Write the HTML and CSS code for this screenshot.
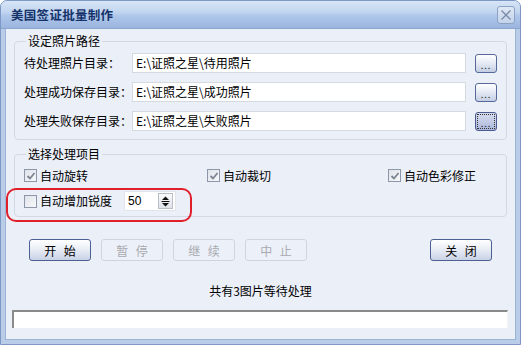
FILE: index.html
```html
<!DOCTYPE html>
<html lang="zh-CN">
<head>
    <meta charset="UTF-8">
    <title>美国签证批量制作</title>
    <link rel="stylesheet" href="styles.css">
</head>
<body>
    <div class="window">
        <div class="titlebar">
            <span class="title">美国签证批量制作</span>
            <span class="close-btn">
                <svg width="12" height="12" viewBox="0 0 12 12"><path d="M1.5 1.5 L10.5 10.5 M10.5 1.5 L1.5 10.5" stroke="#7a8aa6" stroke-width="1.3" fill="none"/></svg>
            </span>
        </div>
        <div class="client">
            <fieldset class="group paths">
                <legend>设定照片路径</legend>
                <div class="path-row">
                    <span class="label">待处理照片目录：</span>
                    <div class="input">E:\证照之星\待用照片</div>
                    <span class="browse"><span class="dots">...</span></span>
                </div>
                <div class="path-row">
                    <span class="label">处理成功保存目录：</span>
                    <div class="input">E:\证照之星\成功照片</div>
                    <span class="browse"><span class="dots">...</span></span>
                </div>
                <div class="path-row">
                    <span class="label">处理失败保存目录：</span>
                    <div class="input">E:\证照之星\失败照片</div>
                    <span class="browse focused"><span class="dots">...</span></span>
                </div>
            </fieldset>

            <fieldset class="group options">
                <legend>选择处理项目</legend>
                <div class="opt-grid">
                    <label class="opt"><span class="chk"><svg width="10" height="10" viewBox="0 0 10 10"><path d="M1.5 5 L4 7.5 L8.5 2" stroke="#7d8491" stroke-width="1.8" fill="none"/></svg></span>自动旋转</label>
                    <label class="opt"><span class="chk"><svg width="10" height="10" viewBox="0 0 10 10"><path d="M1.5 5 L4 7.5 L8.5 2" stroke="#7d8491" stroke-width="1.8" fill="none"/></svg></span>自动裁切</label>
                    <label class="opt"><span class="chk"><svg width="10" height="10" viewBox="0 0 10 10"><path d="M1.5 5 L4 7.5 L8.5 2" stroke="#7d8491" stroke-width="1.8" fill="none"/></svg></span>自动色彩修正</label>
                </div>
                <div class="sharp-row">
                    <label class="opt"><span class="chk"></span>自动增加锐度</label>
                    <div class="spinner">
                        <span class="spin-val">50</span>
                        <span class="spin-btn">
                            <svg width="11" height="13" viewBox="0 0 11 13"><path d="M5.5 1.5 L9 5 L2 5 Z" fill="#111"/><path d="M1.5 6.5 H9.5" stroke="#111" stroke-width="1"/><path d="M2 8 L9 8 L5.5 11.5 Z" fill="#111"/></svg>
                        </span>
                    </div>
                </div>
                <div class="highlight"></div>
            </fieldset>

            <div class="actions">
                <span class="btn">开 始</span>
                <span class="btn disabled">暂 停</span>
                <span class="btn disabled">继 续</span>
                <span class="btn disabled">中 止</span>
                <span class="btn close">关 闭</span>
            </div>

            <div class="status">共有3图片等待处理</div>
            <div class="progress"></div>
        </div>
    </div>
</body>
</html>
```

FILE: styles.css
```css
body {
    margin: 0;
    background: #ffffff;
    font-family: "Noto Sans CJK SC", "Liberation Sans", sans-serif;
    font-size: 12px;
    color: #000;
}
.window {
    width: 521px;
    height: 345px;
    box-sizing: border-box;
    border: 1px solid #7d98c4;
    border-radius: 7px 7px 0 0;
    background: #b9cde9;
    display: flex;
    flex-direction: column;
    overflow: hidden;
}
.titlebar {
    height: 27px;
    flex: none;
    display: flex;
    align-items: center;
    padding: 0 5px 0 10px;
    background: linear-gradient(#d7e5f6, #c2d6f0 40%, #aec6ea 55%, #9bb5df);
    border-bottom: 1px solid #8ba5cf;
}
.title {
    font-weight: bold;
    font-size: 12.5px;
    letter-spacing: 0.3px;
    color: #15336b;
}
.close-btn {
    margin-left: auto;
    width: 16px;
    height: 16px;
    border: 1px solid #8da3c6;
    border-radius: 3px;
    background: linear-gradient(#dfe8f5, #c4d3ea);
    display: flex;
    align-items: center;
    justify-content: center;
}
.client {
    flex: 1;
    margin: 0 4px 4px 4px;
    background: #ebeff8;
    border: 1px solid #9db3d6;
    border-top: none;
    display: flex;
    flex-direction: column;
    position: relative;
}
.group {
    margin: 0 8px 0 8px;
    border: 1px solid #d2d8e4;
    border-radius: 4px;
    padding: 4px 9px 8px 9px;
    min-width: 0;
}
.group legend {
    padding: 0 2px;
    margin-left: 2px;
    line-height: 16px;
}
.paths {
    margin-top: 4px;
    display: flex;
    flex-direction: column;
}
.path-row {
    display: flex;
    align-items: center;
    height: 20px;
    margin-bottom: 9px;
}
.path-row:last-child {
    margin-bottom: 0;
}
.label {
    width: 108px;
    flex: none;
    line-height: 16px;
}
.input {
    flex: 1;
    height: 20px;
    box-sizing: border-box;
    background: #fff;
    border: 1px solid #d4d9e2;
    padding-left: 3px;
    line-height: 18px;
    white-space: nowrap;
}
.browse {
    flex: none;
    width: 22px;
    height: 19px;
    margin-left: 9px;
    box-sizing: border-box;
    border: 1px solid #56699a;
    border-radius: 3px;
    background: linear-gradient(#ffffff, #e4e9f3 50%, #c4cee3);
    display: flex;
    align-items: flex-end;
    justify-content: center;
    position: relative;
}
.dots {
    font-size: 9px;
    line-height: 12px;
    letter-spacing: 1px;
    color: #222;
}
.browse.focused {
    border-color: #4d5c8f;
    background: linear-gradient(#d4dbee, #c3cbe6 50%, #aab6da);
}
.browse.focused::after {
    content: "";
    position: absolute;
    left: 1px;
    top: 1px;
    right: 1px;
    bottom: 1px;
    border: 1px dotted #333;
}
.options {
    margin-top: 6px;
    padding: 5px 9px 5px 9px;
    position: relative;
}
.opt-grid {
    display: grid;
    grid-template-columns: 183px 181px auto;
    height: 17px;
    align-items: center;
}
.opt {
    display: flex;
    align-items: center;
    line-height: 16px;
}
.chk {
    width: 13px;
    height: 13px;
    box-sizing: border-box;
    border: 1px solid #8e97a9;
    background: linear-gradient(135deg, #dfe3ea, #f7f8fa);
    margin-right: 3px;
    display: flex;
    align-items: center;
    justify-content: center;
}
.sharp-row {
    display: flex;
    align-items: center;
    margin-top: 7px;
    height: 20px;
}
.spinner {
    margin-left: 12px;
    width: 52px;
    height: 20px;
    box-sizing: border-box;
    background: #fff;
    border: 1px solid #e1e4ea;
    display: flex;
    align-items: center;
}
.spin-val {
    flex: 1;
    padding-left: 3px;
    font-family: "Liberation Sans", sans-serif;
}
.spin-btn {
    width: 15px;
    height: 16px;
    margin-right: 2px;
    box-sizing: border-box;
    border: 1px solid #b8bec9;
    background: linear-gradient(#fafbfc, #dde1e8);
    display: flex;
    align-items: center;
    justify-content: center;
}
.highlight {
    position: absolute;
    left: -9px;
    top: 26px;
    width: 186px;
    height: 34px;
    box-sizing: border-box;
    border: 2px solid #e11f2b;
    border-radius: 10px;
}
.actions {
    display: flex;
    gap: 10px;
    margin-top: 22px;
    padding: 0 23px 0 23px;
}
.btn {
    width: 62px;
    height: 22px;
    box-sizing: border-box;
    border: 1px solid #4c6191;
    border-radius: 3px;
    background: linear-gradient(#ffffff, #e9edf5 45%, #c9d2e6);
    display: flex;
    align-items: center;
    justify-content: center;
    white-space: pre;
    word-spacing: 5px;
}
.btn.disabled {
    border-color: #cfd4de;
    background: #ecf0f8;
    color: #a9abb0;
}
.btn.close {
    margin-left: auto;
}
.status {
    margin-top: 22px;
    text-align: center;
    line-height: 16px;
}
.progress {
    margin: 11px 7px 0 6px;
    height: 18px;
    box-sizing: border-box;
    background: #fff;
    border-top: 2px solid #8a8a8a;
    border-left: 2px solid #8a8a8a;
    border-right: 1px solid #f4f4f4;
}
```
